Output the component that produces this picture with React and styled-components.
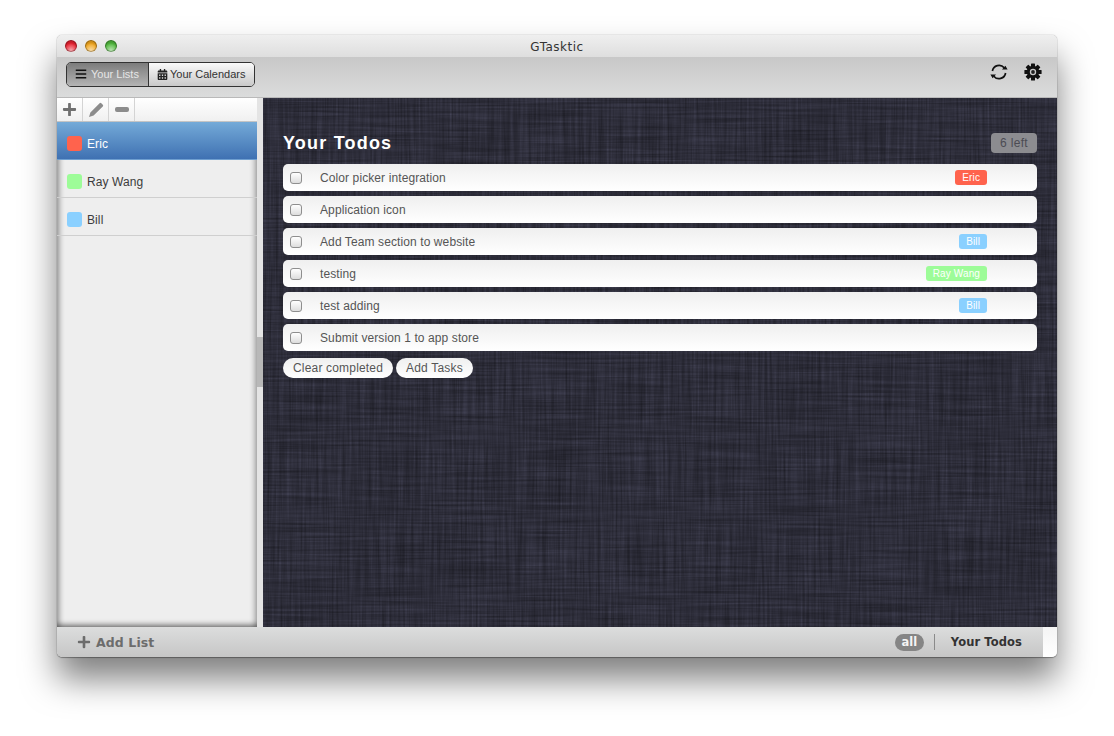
import React from "react";
import styled, { createGlobalStyle } from "styled-components";
import { FaBars, FaCalendarAlt, FaPlus } from "react-icons/fa";

const lists = [
  { name: "Eric", color: "#ff634d", selected: true },
  { name: "Ray Wang", color: "#9dfc98" },
  { name: "Bill", color: "#8ad0ff" },
];

const todos = [
  { text: "Color picker integration", tag: "Eric", color: "#ff634d" },
  { text: "Application icon" },
  { text: "Add Team section to website", tag: "Bill", color: "#8ad0ff" },
  { text: "testing", tag: "Ray Wang", color: "#9dfc98" },
  { text: "test adding", tag: "Bill", color: "#8ad0ff" },
  { text: "Submit version 1 to app store" },
];

const gearTeeth = [0, 45, 90, 135, 180, 225, 270, 315];

const streakMatrix = "0.42 0 0 0 0.49 0.42 0 0 0 0.49 0.42 0 0 0 0.49 0 0 0 0 1";

// woven linen behind the todo panel
const LinenTexture = () => (
  <LinenSvg aria-hidden="true">
    <filter id="linen" x="0" y="0" width="100%" height="100%" colorInterpolationFilters="sRGB">
      <feTurbulence type="fractalNoise" baseFrequency="0.012 0.45" numOctaves="3" seed="4" />
      <feColorMatrix values={streakMatrix} result="across" />
      <feTurbulence type="fractalNoise" baseFrequency="0.45 0.012" numOctaves="3" seed="11" />
      <feColorMatrix values={streakMatrix} result="down" />
      <feBlend in="across" in2="down" mode="multiply" />
      <feColorMatrix values="0.36 0 0 0 0 0 0.36 0 0 0 0 0 0.46 0 0 0 0 0 0 1" />
    </filter>
    <rect width="100%" height="100%" filter="url(#linen)" />
  </LinenSvg>
);

const App = () => (
  <Stage>
    <GlobalStyle />
    <Window>
      <TitleBar>
        <Lights>
          <Light $color="#e8202f" />
          <Light $color="#f0a51c" />
          <Light $color="#4fb83c" />
        </Lights>
        GTasktic
      </TitleBar>
      <Toolbar>
        <Segmented>
          <Segment $active>
            <FaBars size={12} color="#111" />
            Your Lists
          </Segment>
          <Segment>
            <FaCalendarAlt size={11} color="#222" />
            Your Calendars
          </Segment>
        </Segmented>
        <ToolIcons>
          <svg width="18" height="18" viewBox="0 0 18 18" fill="none">
            <path d="M2.4 8A6.7 6.7 0 0 1 14.2 4.8" stroke="#111" strokeWidth="1.7" />
            <path d="M15.6 10A6.7 6.7 0 0 1 3.8 13.2" stroke="#111" strokeWidth="1.7" />
            <path d="M12 6.6L17.6 6.6L15.4 2.8Z M6 11.4L0.4 11.4L2.6 15.2Z" fill="#111" />
          </svg>
          <svg width="18" height="18" viewBox="0 0 18 18">
            {gearTeeth.map((angle) => (
              <rect
                key={angle}
                x="7"
                y="0.4"
                width="4"
                height="4"
                rx="0.6"
                fill="#111"
                transform={`rotate(${angle} 9 9)`}
              />
            ))}
            <circle cx="9" cy="9" r="6.2" fill="#111" />
            <circle cx="9" cy="9" r="3.2" fill="#c8c8c8" />
            <circle cx="9" cy="9" r="1.9" fill="#222" />
          </svg>
        </ToolIcons>
      </Toolbar>
      <Content>
        <Sidebar>
          <SideTools>
            <SideTool>
              <FaPlus size={15} />
            </SideTool>
            <SideTool $light>
              <svg width="16" height="16" viewBox="0 0 16 16">
                <path d="M1 15L2.4 10.4L11.6 1.2A1.2 1.2 0 0 1 13.3 1.2L14.8 2.7A1.2 1.2 0 0 1 14.8 4.4L5.6 13.6Z" fill="currentColor" />
              </svg>
            </SideTool>
            <SideTool $light>
              <MinusBar />
            </SideTool>
          </SideTools>
          {lists.map((list) => (
            <ListItem key={list.name} $selected={list.selected}>
              <Swatch $color={list.color} />
              {list.name}
            </ListItem>
          ))}
        </Sidebar>
        <Splitter>
          <Handle />
        </Splitter>
        <Main>
          <LinenTexture />
          <MainHeader>
            <Heading>Your Todos</Heading>
            <LeftBadge>6 left</LeftBadge>
          </MainHeader>
          <TodoList>
            {todos.map((todo) => (
              <Todo key={todo.text}>
                <Check />
                <TodoText>{todo.text}</TodoText>
                {todo.tag && <Tag $color={todo.color}>{todo.tag}</Tag>}
              </Todo>
            ))}
          </TodoList>
          <Actions>
            <Pill>Clear completed</Pill>
            <Pill>Add Tasks</Pill>
          </Actions>
        </Main>
      </Content>
      <BottomBar>
        <AddList>
          <FaPlus size={14} />
          Add List
        </AddList>
        <Filter>
          <AllPill>all</AllPill>
          <Separator />
          <FilterName>Your Todos</FilterName>
          <Corner />
        </Filter>
      </BottomBar>
    </Window>
  </Stage>
);

const GlobalStyle = createGlobalStyle`
  html, body {
    margin: 0;
    background: #fff;
  }
`;

const Stage = styled.div`
  width: 1114px;
  height: 736px;
  box-sizing: border-box;
  padding: 35px 57px 0;
  overflow: hidden;
  font-family: "Liberation Sans", Arial, sans-serif;
`;

const Window = styled.div`
  width: 1000px;
  height: 622px;
  display: flex;
  flex-direction: column;
  border-radius: 5px;
  overflow: hidden;
  box-shadow: 0 0 1px rgba(0, 0, 0, 0.55), 0 1px 1px rgba(0, 0, 0, 0.3),
    0 22px 34px rgba(0, 0, 0, 0.5);
`;

const TitleBar = styled.div`
  position: relative;
  height: 22px;
  flex: none;
  box-sizing: border-box;
  padding-top: 2px;
  display: flex;
  align-items: center;
  justify-content: center;
  background: linear-gradient(#efefef, #dedede);
  font: 12px "DejaVu Sans", sans-serif;
  letter-spacing: 0.5px;
  color: #333;
`;

const Lights = styled.div`
  position: absolute;
  left: 8px;
  top: 5px;
  display: flex;
  gap: 8px;
`;

const Light = styled.span`
  width: 12px;
  height: 12px;
  border-radius: 50%;
  background: radial-gradient(circle at 50% 85%, rgba(255, 255, 255, 0.6) 0%, transparent 60%),
    ${(p) => p.$color};
  box-shadow: inset 0 0 0 1px rgba(0, 0, 0, 0.3), inset 0 3px 2px rgba(0, 0, 0, 0.15);
`;

const Toolbar = styled.div`
  height: 41px;
  flex: none;
  box-sizing: border-box;
  padding: 5px 15px 0 9px;
  display: flex;
  justify-content: space-between;
  align-items: flex-start;
  background: linear-gradient(#c8c8c8, #dbdcdc);
  border-bottom: 1px solid #b9b9b9;
`;

const Segmented = styled.div`
  display: flex;
  height: 25px;
  box-sizing: border-box;
  border: 1px solid #333;
  border-radius: 5px;
  overflow: hidden;
`;

const Segment = styled.div`
  display: flex;
  align-items: center;
  gap: ${(p) => (p.$active ? "4px" : "2px")};
  box-sizing: border-box;
  width: ${(p) => (p.$active ? "82px" : "105px")};
  padding: 0 0 1px 8px;
  font-size: 11px;
  color: ${(p) => (p.$active ? "#e6e6e6" : "#333")};
  background: ${(p) =>
    p.$active ? "linear-gradient(#7c7c7c, #b4b4b4)" : "linear-gradient(#fafafa, #c9c9c9)"};
  border-right: ${(p) => (p.$active ? "1px solid #333" : "0")};
`;

const ToolIcons = styled.div`
  display: flex;
  align-items: center;
  gap: 16px;
  height: 20px;
`;

const Content = styled.div`
  flex: 1;
  display: flex;
  min-height: 0;
`;

const Sidebar = styled.div`
  position: relative;
  width: 200px;
  flex: none;
  background: #eee;
  box-shadow: inset 5px 0 5px -2px rgba(0, 0, 0, 0.3), inset -5px 0 5px -2px rgba(0, 0, 0, 0.25),
    inset 0 -5px 5px -2px rgba(0, 0, 0, 0.4);
`;

const SideTools = styled.div`
  display: flex;
  height: 24px;
  box-sizing: border-box;
  background: linear-gradient(#fff, #f0f0f0);
  border-bottom: 1px solid #c4c4c4;
`;

const SideTool = styled.div`
  width: 26px;
  box-sizing: border-box;
  display: flex;
  align-items: center;
  justify-content: center;
  color: ${(p) => (p.$light ? "#8c8c8c" : "#707070")};
  border-right: 1px solid #d4d4d4;
`;

const MinusBar = styled.span`
  width: 14px;
  height: 5px;
  border-radius: 2px;
  background: currentColor;
`;

const ListItem = styled.div`
  display: flex;
  align-items: center;
  gap: 5px;
  height: 38px;
  box-sizing: border-box;
  padding: 6px 0 0 10px;
  font-size: 12px;
  letter-spacing: 0.1px;
  color: ${(p) => (p.$selected ? "#fff" : "#3c3c3c")};
  background: ${(p) => (p.$selected ? "linear-gradient(#74aad8, #3f71b2)" : "transparent")};
  border-bottom: 1px solid ${(p) => (p.$selected ? "#6f9fd0" : "#cfcfcf")};
`;

const Swatch = styled.span`
  width: 15px;
  height: 15px;
  border-radius: 3px;
  background: ${(p) => p.$color};
`;

const Splitter = styled.div`
  width: 6px;
  flex: none;
  box-sizing: border-box;
  padding-top: 239px;
  background: #e4e4e4;
`;

const Handle = styled.div`
  height: 50px;
  background: #b8b8b8;
`;

const Main = styled.div`
  position: relative;
  flex: 1;
  box-sizing: border-box;
  padding: 35px 20px 0;
  background-color: #2c2c37;
  overflow: hidden;

  & > * {
    position: relative;
  }
`;

const LinenSvg = styled.svg`
  && {
    position: absolute;
  }
  left: 0;
  top: 0;
  width: 100%;
  height: 100%;
`;

const MainHeader = styled.div`
  display: flex;
  align-items: center;
  justify-content: space-between;
  height: 20px;
  margin-bottom: 11px;
`;

const Heading = styled.h1`
  margin: 0;
  padding-top: 1px;
  font-size: 18px;
  font-weight: bold;
  letter-spacing: 1.2px;
  color: #fff;
`;

const LeftBadge = styled.div`
  width: 46px;
  height: 20px;
  line-height: 20px;
  text-align: center;
  border-radius: 4px;
  font-size: 12px;
  letter-spacing: 0.3px;
  color: #4b4b53;
  background: #8c8c90;
`;

const TodoList = styled.div`
  display: flex;
  flex-direction: column;
  gap: 5px;
`;

const Todo = styled.div`
  display: flex;
  align-items: center;
  height: 27px;
  padding: 0 50px 0 7px;
  border-radius: 5px;
  background: linear-gradient(#efefef, #fff);
`;

const Check = styled.span`
  width: 12px;
  height: 12px;
  flex: none;
  border: 1px solid #8e8e8e;
  box-sizing: border-box;
  border-radius: 3px;
  background: linear-gradient(#fff, #ddd);
`;

const TodoText = styled.span`
  flex: 1;
  margin-left: 18px;
  font-size: 12px;
  letter-spacing: 0.1px;
  color: #555;
`;

const Tag = styled.span`
  height: 15px;
  line-height: 15px;
  padding: 0 7px;
  border-radius: 3px;
  font-size: 10px;
  letter-spacing: 0.12px;
  color: #fff;
  background: ${(p) => p.$color};
`;

const Actions = styled.div`
  display: flex;
  gap: 3px;
  margin-top: 7px;
`;

const Pill = styled.div`
  height: 20px;
  line-height: 20px;
  padding: 0 10px;
  border-radius: 10px;
  font-size: 12px;
  letter-spacing: 0.18px;
  color: #555;
  background: linear-gradient(#efefef, #fff);
`;

const BottomBar = styled.div`
  height: 30px;
  flex: none;
  display: flex;
  align-items: center;
  justify-content: space-between;
  padding-left: 20px;
  background: linear-gradient(#dcdddd, #c6c6c6);
`;

const AddList = styled.div`
  display: flex;
  align-items: center;
  gap: 5px;
  font: bold 12.5px "DejaVu Sans", sans-serif;
  letter-spacing: 0.1px;
  color: #6c6c6c;
`;

const Filter = styled.div`
  display: flex;
  align-items: center;
  align-self: stretch;
`;

const AllPill = styled.span`
  width: 29px;
  height: 17px;
  text-align: center;
  border-radius: 9px;
  font: bold 11.5px/16px "DejaVu Sans", sans-serif;
  color: #f4f4f4;
  background: #858585;
`;

const Separator = styled.span`
  width: 1px;
  height: 16px;
  margin: 0 16px 0 10px;
  background: #8a8a8a;
`;

const FilterName = styled.span`
  font: bold 11.5px "DejaVu Sans", sans-serif;
  letter-spacing: 0.1px;
  color: #333;
`;

const Corner = styled.span`
  width: 14px;
  align-self: stretch;
  margin-left: 21px;
  background: linear-gradient(#f4f4f4, #fff);
`;

export default App;
